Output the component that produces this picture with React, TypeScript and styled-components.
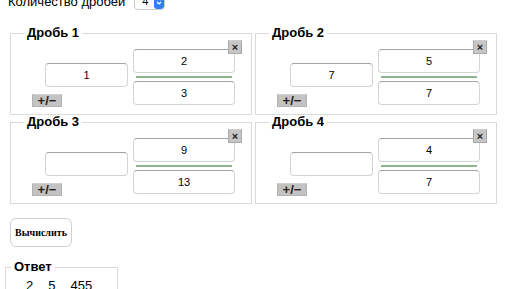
import React from "react";
import styled, { createGlobalStyle } from "styled-components";

const Global = createGlobalStyle`
  html, body { margin: 0; padding: 0; background: #fff; }
  body { font-family: "Liberation Sans", Arial, sans-serif; color: #000; overflow: hidden; }
`;

const Page = styled.div`
  padding-left: 10px;
`;

const TopRow = styled.div`
  display: flex;
  align-items: center;
  gap: 9px;
  height: 18px;
  margin-top: -8px;
  margin-left: -2px;
  font-size: 13px;
  line-height: 15px;
`;

const SelectBox = styled.div`
  display: flex;
  align-items: center;
  width: 31px;
  height: 17px;
  box-sizing: border-box;
  border: 1px solid #c9c9c9;
  border-radius: 4px;
  background: #fff;
  font-size: 11px;
  overflow: hidden;
`;

const SelectValue = styled.span`
  flex: 1;
  padding-left: 7px;
`;

const SelectArrow = styled.span`
  display: flex;
  align-items: center;
  justify-content: center;
  width: 10px;
  height: 100%;
  background: #2f7ff0;
  border-radius: 3px;
`;

const Grid = styled.div`
  display: grid;
  grid-template-columns: 242px 242px;
  column-gap: 3px;
  margin-top: 16px;
`;

const Fieldset = styled.fieldset`
  margin: 0;
  min-inline-size: 0;
  box-sizing: border-box;
  border: 1px solid #dadada;
  padding: 9px 0 7px 13px;
`;

const Legend = styled.legend`
  padding: 0 3px;
  font-size: 13px;
  line-height: 14px;
  font-weight: bold;
`;

const Body = styled.div`
  display: flex;
  gap: 5px;
  padding-left: 8px;
`;

const LeftCol = styled.div`
  width: 96px;
  display: flex;
  flex-direction: column;
  align-items: flex-start;
  padding-top: 14px;
  gap: 7px;
`;

const RightCol = styled.div`
  position: relative;
  width: 102px;
  display: flex;
  flex-direction: column;
  gap: 3px;
`;

const NumInput = styled.div<{ $w: number }>`
  width: ${(p) => p.$w}px;
  height: 24px;
  box-sizing: border-box;
  border: 1px solid #d4d4d4;
  border-top-color: #a3a3a3;
  border-radius: 4px;
  background: #fff;
  display: flex;
  align-items: center;
  justify-content: center;
  font-size: 11px;
  align-self: flex-end;
`;

const WholeInput = styled(NumInput)`
  margin-left: 13px;
  align-self: flex-start;
`;

const Bar = styled.div`
  height: 2px;
  margin: 0 3px;
  background: #8fb48f;
`;

const SmallButton = styled.button`
  height: 13px;
  width: 30px;
  padding: 0;
  box-sizing: border-box;
  border: 1px solid #b2b2b2;
  border-top-color: #d0d0d0;
  background: #c3c3c3;
  font-family: "Liberation Sans", Arial, sans-serif;
  font-size: 13px;
  font-weight: bold;
  line-height: 11px;
  color: #222;
  display: flex;
  align-items: center;
  justify-content: center;
`;

const CloseButton = styled.button`
  position: absolute;
  top: -9px;
  right: -7px;
  width: 14px;
  height: 14px;
  padding: 0;
  box-sizing: border-box;
  border: 1px solid #a9a9a9;
  border-top-color: #cfcfcf;
  background: #c6c6c6;
  font-family: "Liberation Sans", Arial, sans-serif;
  font-size: 11px;
  font-weight: bold;
  line-height: 12px;
  color: #222;
`;

const CalcButton = styled.button`
  display: block;
  margin-top: 14px;
  width: 62px;
  height: 29px;
  padding: 0;
  border: 1px solid #d0d0d0;
  border-radius: 6px;
  background: #fff;
  font-family: "Liberation Serif", "Times New Roman", serif;
  font-weight: bold;
  font-size: 10px;
  color: #000;
`;

const AnswerSet = styled.fieldset`
  margin: 13px 0 0 -5px;
  width: 113px;
  box-sizing: border-box;
  border: 1px solid #dadada;
  padding: 4px 0 0 5px;
  min-inline-size: 0;
`;

const Numbers = styled.div`
  display: flex;
  gap: 15px;
  padding-left: 15px;
  font-size: 13px;
  line-height: 15px;
`;

const fractions = [
  { title: "Дробь 1", whole: "1", num: "2", den: "3" },
  { title: "Дробь 2", whole: "7", num: "5", den: "7" },
  { title: "Дробь 3", whole: "", num: "9", den: "13" },
  { title: "Дробь 4", whole: "", num: "4", den: "7" },
];

export default function App() {
  return (
    <Page>
      <Global />
      <TopRow>
        <span>Количество дробей</span>
        <SelectBox>
          <SelectValue>4</SelectValue>
          <SelectArrow>
            <svg width="6" height="10" viewBox="0 0 6 10">
              <path d="M1 4 L3 2 L5 4 M1 6 L3 8 L5 6" stroke="#fff" strokeWidth="1.2" fill="none" />
            </svg>
          </SelectArrow>
        </SelectBox>
      </TopRow>
      <Grid>
        {fractions.map((f) => (
          <Fieldset key={f.title}>
            <Legend>{f.title}</Legend>
            <Body>
              <LeftCol>
                <WholeInput $w={83}>{f.whole}</WholeInput>
                <SmallButton>+/−</SmallButton>
              </LeftCol>
              <RightCol>
                <CloseButton>×</CloseButton>
                <NumInput $w={102}>{f.num}</NumInput>
                <Bar />
                <NumInput $w={102}>{f.den}</NumInput>
              </RightCol>
            </Body>
          </Fieldset>
        ))}
      </Grid>
      <CalcButton>Вычислить</CalcButton>
      <AnswerSet>
        <Legend>Ответ</Legend>
        <Numbers>
          <span>2</span>
          <span>5</span>
          <span>455</span>
        </Numbers>
      </AnswerSet>
    </Page>
  );
}
